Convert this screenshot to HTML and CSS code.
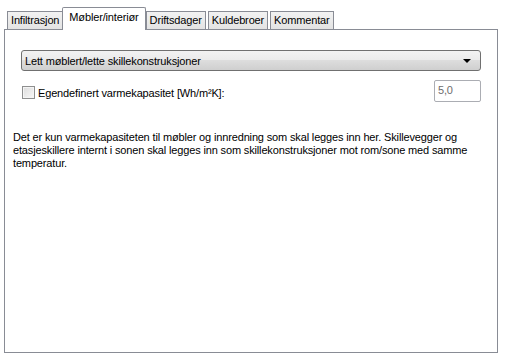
FILE: index.html
```html
<!DOCTYPE html>
<html lang="no">
<head>
    <meta charset="UTF-8">
    <title>Møbler/interiør</title>
    <link rel="stylesheet" href="styles.css">
</head>
<body>
    <div class="tabs">
        <div class="tab-strip">
            <div class="tab tab-first">Infiltrasjon</div>
            <div class="tab active">Møbler/interiør</div>
            <div class="tab">Driftsdager</div>
            <div class="tab">Kuldebroer</div>
            <div class="tab">Kommentar</div>
        </div>

        <div class="panel">
            <div class="controls">
                <div class="select">
                    <span>Lett møblert/lette skillekonstruksjoner</span>
                    <span class="arrow"></span>
                </div>

                <div class="check-row">
                    <label class="check">
                        <span class="box"></span>
                        Egendefinert varmekapasitet [Wh/m²K]:
                    </label>
                    <div class="textbox">5,0</div>
                </div>
            </div>

            <p class="note">Det er kun varmekapasiteten til møbler og innredning som skal legges inn her. Skillevegger og etasjeskillere internt i sonen skal legges inn som skillekonstruksjoner mot rom/sone med samme temperatur.</p>
        </div>
    </div>
</body>
</html>
```

FILE: styles.css
```css
* {
    margin: 0;
    padding: 0;
    box-sizing: border-box;
}

body {
    font-family: "Liberation Sans", Arial, sans-serif;
    font-size: 11px;
    letter-spacing: -0.15px;
    color: #000;
    background: #fff;
}

.tabs {
    padding: 7px 0 0 4px;
    width: 498px;
}

.tab-strip {
    display: flex;
    align-items: flex-end;
    padding-left: 3px;
    height: 22px;
    position: relative;
    z-index: 1;
}

.tab {
    height: 18px;
    line-height: 16px;
    padding: 0 3px;
    margin-right: 2px;
    border: 1px solid #898c95;
    border-bottom: none;
    background: linear-gradient(#f2f2f2, #e3e3e3);
    white-space: nowrap;
}

.tab.active {
    height: 23px;
    line-height: 18px;
    padding: 0 6px;
    margin: 0 0 -1px -3px;
    background: #fff;
    border-radius: 2px 2px 0 0;
}

.panel {
    height: 324px;
    border: 1px solid #898c95;
    padding: 20px 16px 0 8px;
}

.controls {
    margin-left: 8px;
}

.select {
    height: 21px;
    display: flex;
    align-items: center;
    justify-content: space-between;
    padding: 0 9px 0 3px;
    border: 1px solid #707070;
    border-radius: 3px;
    background: linear-gradient(#f2f2f2 0%, #ebebeb 45%, #dddddd 50%, #cfcfcf 100%);
}

.arrow {
    width: 0;
    height: 0;
    border-left: 4px solid transparent;
    border-right: 4px solid transparent;
    border-top: 4px solid #000;
}

.check-row {
    display: flex;
    justify-content: space-between;
    align-items: center;
    margin-top: 9px;
}

.check {
    display: flex;
    align-items: center;
    gap: 3px;
    margin-top: 3px;
    margin-left: 1px;
}

.box {
    width: 13px;
    height: 13px;
    border: 1px solid #8e8f8f;
    background: linear-gradient(135deg, #dcdcdc, #f8f8f8);
    box-shadow: inset 0 0 0 1px #f4f4f4;
}

.textbox {
    width: 47px;
    height: 22px;
    padding: 3px 3px;
    border: 1px solid #abadb3;
    border-radius: 2px;
    color: #6d6d6d;
}

.note {
    margin-top: 29px;
    line-height: 13px;
}
```
